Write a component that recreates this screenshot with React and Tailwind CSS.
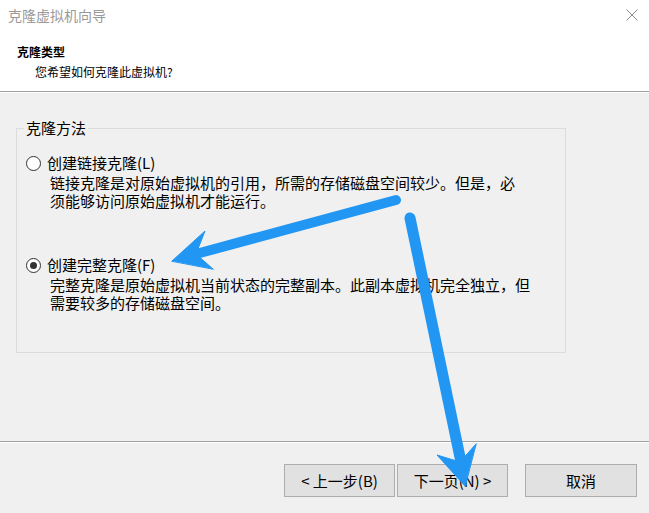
import React from "react";

function Radio({ checked }) {
  return (
    <span className="flex h-[15px] w-[15px] shrink-0 items-center justify-center rounded-full border border-[#333333] bg-white">
      {checked && <span className="h-[7px] w-[7px] rounded-full bg-[#333333]" />}
    </span>
  );
}

function Option({ checked, label, lines }) {
  return (
    <div className="flex flex-col">
      <div className="flex h-[20px] items-center gap-[6px]">
        <Radio checked={checked} />
        <span className="text-[15px] leading-[20px] text-black">{label}</span>
      </div>
      <div className="mt-[1px] pl-[24px] text-[15px] leading-[18px] text-black">
        {lines.map((l, i) => (
          <div key={i}>{l}</div>
        ))}
      </div>
    </div>
  );
}

function Button({ children, className = "" }) {
  return (
    <button
      className={
        "flex h-[33px] w-[111px] items-center justify-center border border-[#adadad] bg-[#e1e1e1] text-[15px] leading-[20px] text-black " +
        className
      }
    >
      {children}
    </button>
  );
}

export default function App() {
  return (
    <div
      className="relative flex h-[513px] w-[649px] flex-col overflow-hidden bg-[#f0f0f0]"
      style={{ fontFamily: '"Noto Sans CJK SC", "Noto Sans", sans-serif' }}
    >
      {/* header */}
      <div className="h-[91px] bg-white">
        <div className="flex h-[30px] items-center justify-between pl-[8px] pr-[11px]">
          <span className="text-[14px] leading-[18px] text-[#999999]">克隆虚拟机向导</span>
          <svg width="12" height="12" viewBox="0 0 12 12">
            <path d="M0.5 0.5 L11.5 11.5 M11.5 0.5 L0.5 11.5" stroke="#8a8a8a" strokeWidth="1" fill="none" />
          </svg>
        </div>
        <div className="pl-[17px] pt-[14px]">
          <div className="text-[12px] font-bold leading-[16px] text-black">克隆类型</div>
          <div className="mt-[4px] pl-[18px] text-[12px] leading-[16px] text-black">您希望如何克隆此虚拟机?</div>
        </div>
      </div>
      <div className="h-px bg-[#a0a0a0]" />
      <div className="h-px bg-white" />

      {/* body */}
      <div className="flex-1 px-[16px]">
        <fieldset className="mt-[26px] h-[234px] w-[550px] border border-[#dcdcdc] px-0 pt-[16px]">
          <legend className="ml-[7px] px-[2px] text-[15px] leading-[18px] text-black">克隆方法</legend>
          <div className="flex flex-col gap-[45px] pl-[9px]">
            <Option
              checked={false}
              label="创建链接克隆(L)"
              lines={["链接克隆是对原始虚拟机的引用，所需的存储磁盘空间较少。但是，必", "须能够访问原始虚拟机才能运行。"]}
            />
            <Option
              checked={true}
              label="创建完整克隆(F)"
              lines={["完整克隆是原始虚拟机当前状态的完整副本。此副本虚拟机完全独立，但", "需要较多的存储磁盘空间。"]}
            />
          </div>
        </fieldset>
      </div>

      <div className="h-px bg-[#a0a0a0]" />
      <div className="h-px bg-white" />
      <div className="flex h-[70px] items-start justify-end pr-[12px] pt-[21px]">
        <Button>&lt; 上一步(B)</Button>
        <Button className="ml-[2px]">下一页(N) &gt;</Button>
        <Button className="ml-[17px] w-[112px]">取消</Button>
      </div>

      {/* annotation arrows overlay */}
      <svg className="pointer-events-none absolute left-0 top-0" width="649" height="513" viewBox="0 0 649 513">
        <g fill="#2196f3" stroke="#2196f3" strokeLinecap="round" strokeLinejoin="round">
          <line x1="396" y1="200" x2="196" y2="254" strokeWidth="10" />
          <polygon points="172,261 205,231 196,254 213,269" strokeWidth="1" />
          <line x1="410" y1="218" x2="461" y2="462" strokeWidth="11" />
          <polygon points="465,486 437,455 460,462 476,444" strokeWidth="1" />
        </g>
      </svg>
    </div>
  );
}
